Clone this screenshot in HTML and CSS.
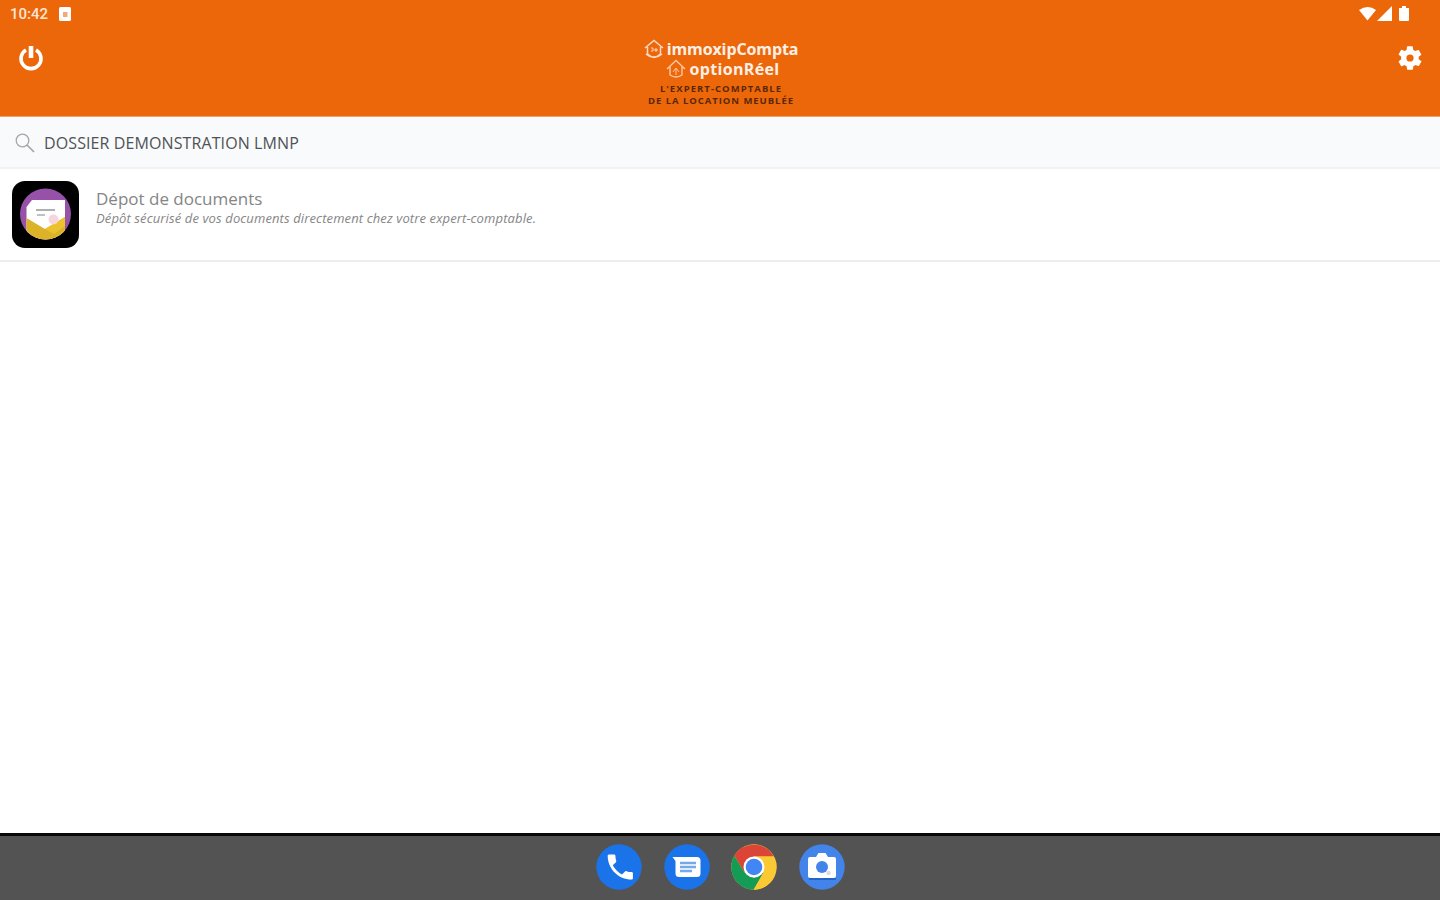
FILE: index.html
```html
<!DOCTYPE html>
<html lang="fr">
<head>
<meta charset="utf-8">
<title>immoxipCompta</title>
<link rel="stylesheet" href="styles.css">
</head>
<body>
<header class="header">
  <div class="status">
    <div class="status-left">
      <span class="clock">10:42</span>
      <svg class="notif" width="12" height="14" viewBox="0 0 12 14"><rect width="12" height="14" rx="1.5" fill="#fff"/><rect x="4" y="5" width="4.5" height="5" fill="#f5a877"/></svg>
    </div>
    <svg width="52" height="18" viewBox="0 0 52 18" fill="#fff"><path d="M0 5Q9-1 17 5L8.500 15.500Z"/><path d="M33 1V16H18Z"/><path d="M40 3h3V1h4v2h3v12a1 1 0 0 1-1 1h-8a1 1 0 0 1-1-1Z"/></svg>
  </div>
  <div class="toolbar">
    <svg class="power" width="26" height="28" viewBox="0 0 26 28" fill="none" stroke="#fff" stroke-width="3.600"><path d="M8 6A10 10 0 1 0 18 6"/><path d="M13 2V14" stroke-width="4.600"/></svg>
    <div class="logo">
      <div class="brand brand-first">
        <svg width="20" height="20" viewBox="0 0 20 20" fill="none" stroke="#ffd9c2" stroke-width="1.500"><path d="M1 9L10 1.500L19 9M3.500 8V15Q10 21 16.500 15V8M2 15Q10 22 18 15"/><path d="M7 9h2v3H7M12 9v4M10 11h4" stroke-width="1"/></svg>
        <span>immoxipCompta</span>
      </div>
      <div class="brand brand-second">
        <svg width="20" height="20" viewBox="0 0 20 20" fill="none" stroke="#ffc7a4" stroke-width="1.400"><path d="M1 10L10 1.500L19 10M4 8V16Q10 20 16 16V8"/><path d="M7 13L10 9l3 4M10 10v6" stroke-width="1"/></svg>
        <span>optionRéel</span>
      </div>
      <div class="tagline tagline-first">L'EXPERT-COMPTABLE</div>
      <div class="tagline tagline-second">DE LA LOCATION MEUBLÉE</div>
    </div>
    <svg class="gear" width="28" height="28" viewBox="0 0 24 24" fill="#fff"><path fill-rule="evenodd" d="M19.400 13c.1-.3.1-.7.100-1s0-.7-.1-1l2.100-1.600c.2-.2.300-.4.100-.6l-2-3.500c-.1-.2-.4-.3-.6-.2l-2.500 1c-.5-.4-1.100-.7-1.700-1l-.4-2.600c0-.3-.2-.5-.5-.5h-4c-.2 0-.4.200-.5.500L9.100 5.100c-.6.300-1.200.6-1.700 1L4.900 5c-.2-.1-.4 0-.6.200l-2 3.500c-.1.200-.1.500.1.600L4.500 11c0 .3-.1.700-.1 1s0 .7.100 1l-2.100 1.700c-.2.100-.2.400-.1.600l2 3.500c.1.200.4.300.6.200l2.500-1c.5.400 1.100.7 1.700 1l.4 2.600c0 .3.200.5.500.5h4c.2 0 .4-.2.500-.5l.4-2.700c.6-.2 1.200-.6 1.700-1l2.500 1c.2.100.4 0 .6-.2l2-3.500c.1-.2.1-.4-.1-.6ZM12 8.900a3.100 3.100 0 1 1 0 6.200 3.100 3.100 0 0 1 0-6.200Z"/></svg>
  </div>
</header>
<div class="search">
  <svg width="20" height="20" viewBox="0 0 20 20" fill="none" stroke="#a3a7aa" stroke-width="1.300"><circle cx="7.500" cy="7.500" r="6.300"/><path d="M12 12L19 19" stroke-width="1.700"/></svg>
  <span class="folder">DOSSIER DEMONSTRATION LMNP</span>
</div>
<main class="list">
  <div class="item">
    <svg width="67" height="67" viewBox="0 0 67 67">
      <defs><clipPath id="disc"><circle cx="33.500" cy="33" r="25.500"/></clipPath></defs>
      <rect width="67" height="67" rx="13" fill="#000"/>
      <g clip-path="url(#disc)">
        <rect width="67" height="67" fill="#9652a8"/>
        <path d="M14.500 26L20 19H53V60H14.500Z" fill="#fff"/>
        <path d="M14.500 37L33 48L53 36V60H14.500Z" fill="#dcb229"/>
        <path d="M33 48L53 36V45L42 53Z" fill="#ebc22e"/>
      </g>
      <path d="M24 29H43" stroke="#aeb0b1" stroke-width="2"/><path d="M25 34H33" stroke="#bfc1c2" stroke-width="2"/>
      <circle cx="41.500" cy="38.500" r="5" fill="#f6d5dc"/>
    </svg>
    <div class="item-text">
      <div class="item-title">Dépot de documents</div>
      <div class="item-desc">Dépôt sécurisé de vos documents directement chez votre expert-comptable.</div>
    </div>
  </div>
</main>
<nav class="dock">
  <svg width="46" height="46" viewBox="0 0 46 46"><circle cx="23" cy="23" r="22.700" fill="#1a73e8"/><path transform="translate(7.500 6.200) scale(1.400)" fill="#fff" d="M6.600 10.800c1.500 2.800 3.800 5.100 6.600 6.600l2.200-2.200c.3-.3.700-.4 1-.2 1.100.4 2.300.6 3.600.6.600 0 1 .4 1 1V20c0 .6-.4 1-1 1C10.600 21 3 13.400 3 4c0-.6.400-1 1-1h3.500c.6 0 1 .4 1 1 0 1.300.2 2.500.6 3.600.1.300 0 .7-.2 1Z"/></svg>
  <svg width="46" height="46" viewBox="0 0 46 46"><circle cx="23" cy="23" r="22.700" fill="#1a73e8"/><path d="M8.500 13H33a3.500 3.500 0 0 1 3.500 3.500v13A3.500 3.500 0 0 1 33 33H15a3.500 3.500 0 0 1-3.500-3.500V17Z" fill="#fff"/><path d="M16 19H32M16 23H32M16 27H28" stroke="#75a9ee" stroke-width="2.400"/></svg>
  <svg width="46" height="46" viewBox="0 0 46 46"><circle cx="23" cy="23" r="22.700" fill="#fbc934"/><path d="M23 23L13.500 28.500L3.300 11.700A22.700 22.700 0 0 1 42.700 12.500H23Z" fill="#db4437"/><path d="M3.300 11.700L13.500 28.500L23 34L32.500 28.500L23 45.700A22.700 22.700 0 0 1 3.300 11.700Z" fill="#149b55"/><path d="M23 12.500H42.700A22.700 22.700 0 0 1 22.500 45.700L32.500 28.500Z" fill="#fbc934"/><circle cx="23" cy="23" r="10.500" fill="#fff"/><circle cx="23" cy="23" r="8.300" fill="#4285f4"/></svg>
  <svg width="46" height="46" viewBox="0 0 46 46"><circle cx="23" cy="23" r="22.700" fill="#4284ea"/><path d="M10 35H37" stroke="#2465c7" stroke-width="2"/><path d="M11 13h6l2.500-4h7l2.500 4h6a2 2 0 0 1 2 2v17a2 2 0 0 1-2 2H11a2 2 0 0 1-2-2V15a2 2 0 0 1 2-2Z" fill="#fff"/><circle cx="23" cy="23" r="6" fill="#4284ea"/><circle cx="29.500" cy="29" r="2.200" fill="#d9dde3"/></svg>
</nav>
</body>
</html>
```
FILE: styles.css
```css
* { box-sizing: border-box; }
body {
  margin: 0;
  height: 900px;
  display: flex;
  flex-direction: column;
  background: #fff;
  font-family: "Open Sans", "Noto Sans", sans-serif;
  white-space: nowrap;
  overflow: hidden;
}
svg { display: block; flex: none; }
.header { height: 117px; background: #ec670a; border-bottom: 1px solid #f0a16c; color: #fff; }
.status { height: 28px; padding: 0 29px 0 10px; display: flex; align-items: center; justify-content: space-between; }
.status-left { display: flex; align-items: center; gap: 10px; }
.clock { width: 39px; font: 500 15px/28px Roboto, sans-serif; color: #ffe5d7; }
.toolbar { display: flex; justify-content: space-between; padding: 0 16px 0 18px; }
.power, .gear { margin-top: 16px; }
.logo { display: flex; flex-direction: column; align-items: center; padding: 11px 0 0 2px; }
.brand { display: flex; align-items: center; gap: 3px; height: 20px; font: 700 16px/19px "Open Sans", sans-serif; color: #fff0e7; }
.brand-first { letter-spacing: -.1px; }
.brand-second { letter-spacing: .35px; margin-left: 4px; }
.tagline { font: 700 9.500px/12px "Open Sans", sans-serif; color: #5c2705; }
.tagline-first { margin-top: 4px; letter-spacing: 1.05px; }
.tagline-second { letter-spacing: .95px; }
.search { height: 52px; display: flex; align-items: center; gap: 9px; padding: 2px 15px 0; background: #f8fafc; border-bottom: 2px solid #f0f2f4; }
.folder { font-size: 16px; line-height: 20px; letter-spacing: .1px; color: #505254; }
.list { flex: 1; }
.item { height: 92.500px; display: flex; gap: 17px; padding: 12px 12px 0; border-bottom: 2px solid #ededee; }
.item-text { padding-top: 6px; }
.item-title { font-size: 17px; line-height: 24px; color: #858585; }
.item-desc { font-size: 13px; line-height: 15px; letter-spacing: .12px; font-style: italic; color: #858585; }
.dock { height: 67px; display: flex; justify-content: center; gap: 21.500px; padding: 8px 0 0 1px; border-top: 3px solid #080808; background: #535353; }
```
